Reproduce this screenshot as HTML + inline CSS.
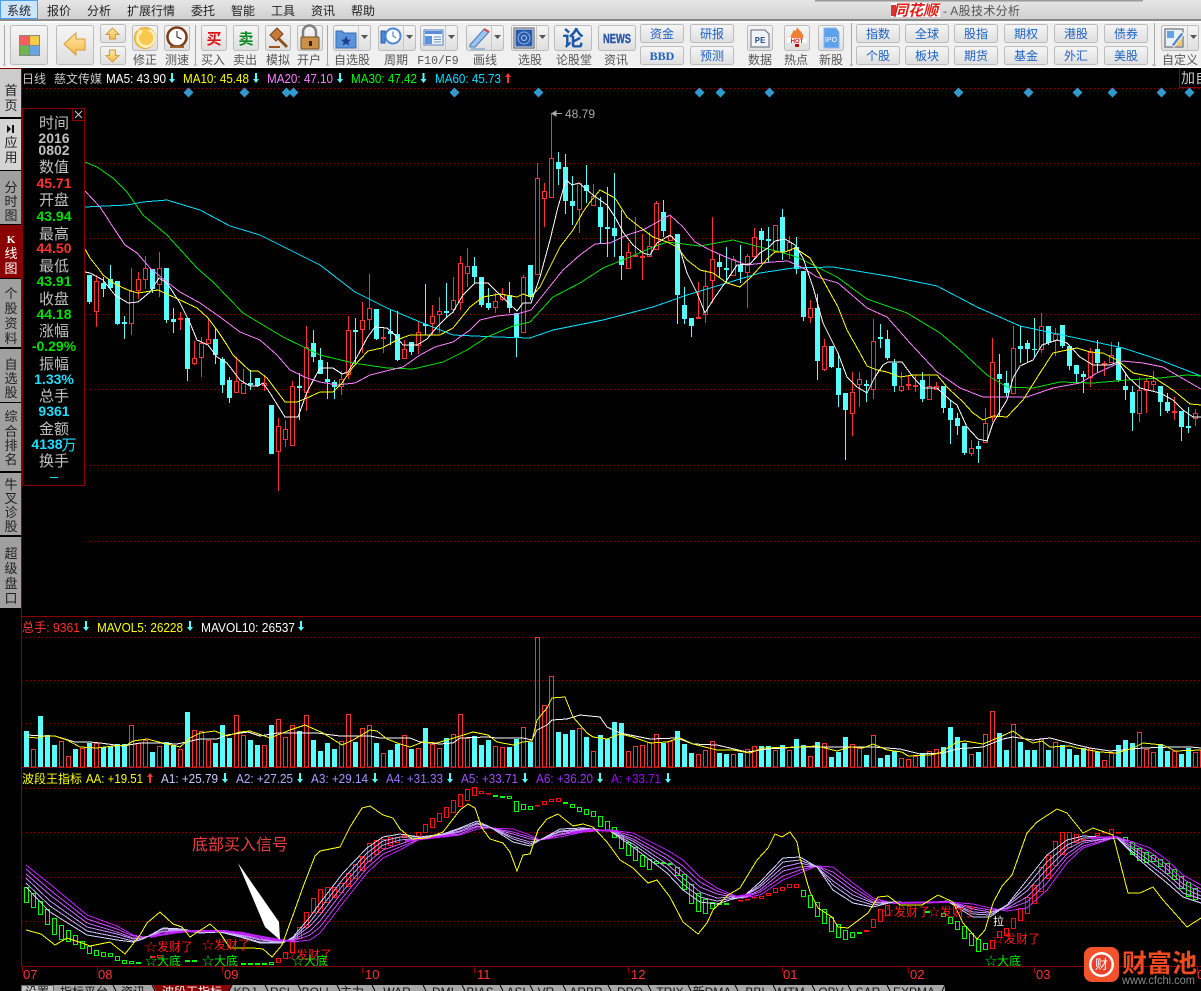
<!DOCTYPE html>
<html><head><meta charset="utf-8"><title>A股技术分析</title>
<style>
html,body{margin:0;padding:0;background:#000;width:1201px;height:991px;overflow:hidden}
svg{display:block;font-family:"Liberation Sans","WenQuanYi Zen Hei","Noto Sans CJK SC",sans-serif}
.l{font-size:12px;fill:#555;text-anchor:middle}
.m{font-size:12px;fill:#222}
.b{font-size:12px;fill:#1c62c4;text-anchor:middle}
.v{font-size:13px;fill:#222;text-anchor:middle}
.h{font-size:13px}
.p{font-size:15px;fill:#c0c0c0;text-anchor:middle}
.n{font-family:"Liberation Sans",sans-serif;font-size:14px;font-weight:bold;text-anchor:middle}
.t{font-size:12px;fill:#111;text-anchor:middle}
.ma{fill:none;stroke-width:1;shape-rendering:crispEdges}
.btn{fill:url(#g);stroke:#bcbcbc}
</style></head><body>
<svg width="1201" height="991" viewBox="0 0 1201 991" xmlns="http://www.w3.org/2000/svg">
<defs>
<linearGradient id="g" x1="0" y1="0" x2="0" y2="1"><stop offset="0" stop-color="#f6f6f6"/><stop offset="1" stop-color="#dedede"/></linearGradient>
<linearGradient id="mb" x1="0" y1="0" x2="0" y2="1"><stop offset="0" stop-color="#e6e6e6"/><stop offset="1" stop-color="#cfcfcf"/></linearGradient>
<linearGradient id="gold" x1="0" y1="0" x2="0" y2="1"><stop offset="0" stop-color="#ffe9a8"/><stop offset="1" stop-color="#f7b94a"/></linearGradient>
<path id="dn" d="M1.500 0h2v6h2l-3 4-3-4h2z"/>
<path id="up" d="M1.500 10h2v-6h2l-3-4-3 4h2z"/>
<path id="dm" d="M0-5 5 0 0 5-5 0z"/>
</defs>
<rect width="1201" height="991" fill="#000"/>

<!-- menu bar -->
<rect width="1201" height="20" fill="url(#mb)"/>
<rect x="815" y="0" width="328" height="1.500" fill="#999"/>
<rect x="0.500" y="0.500" width="37" height="18" fill="#cde4fb" stroke="#4a9fea"/>
<text class="m" x="7" y="15">系统</text><text class="m" x="47" y="15">报价</text><text class="m" x="87" y="15">分析</text><text class="m" x="127" y="15">扩展行情</text><text class="m" x="191" y="15">委托</text><text class="m" x="231" y="15">智能</text><text class="m" x="271" y="15">工具</text><text class="m" x="311" y="15">资讯</text><text class="m" x="351" y="15">帮助</text>
<rect x="891" y="3" width="49" height="14" fill="#fff"/><rect x="891" y="5" width="5" height="11" fill="#e03030"/>
<text x="893" y="15.500" font-size="15" font-weight="bold" font-style="italic" fill="#e0201c">同花顺</text>
<text x="943" y="15" font-size="12" fill="#555" textLength="77" lengthAdjust="spacing">- A股技术分析</text>

<!-- toolbar -->
<rect y="19" width="1201" height="2" fill="#8a8a8a"/>
<rect y="21" width="1201" height="2" fill="#fff"/>
<rect y="23" width="1201" height="44" fill="#f0f0f0"/>
<rect y="67" width="1201" height="1" fill="#fff"/>
<path d="M4.500 25V65M5.500 65H3M195.500 25V65M193.500 65H197M327.500 25V65M326 65H329M851.500 23V66M849.500 65H853M1154.500 23V66M1152 65H1156" stroke="#a8a8a8" fill="none"/>

<rect class="btn" x="10.500" y="25.500" width="37" height="39" rx="2"/>
<rect x="19" y="35" width="21" height="21" fill="#888"/><rect x="20" y="36" width="9" height="9" fill="#f06060"/><rect x="30" y="36" width="9" height="9" fill="#f5cd45"/><rect x="20" y="46" width="9" height="9" fill="#70b450"/><rect x="30" y="46" width="9" height="9" fill="#68a4e4"/>
<rect class="btn" x="56.500" y="25.500" width="37" height="39" rx="2"/>
<path d="M64 44 76 33V39H85V50H76V55z" fill="url(#gold)" stroke="#d89a34"/>
<rect class="btn" x="100.500" y="24.500" width="25" height="18" rx="2"/><path d="M112.500 28 119 34.500H115.500V39H109.500V34.500H106z" fill="url(#gold)" stroke="#d89a34"/>
<rect class="btn" x="100.500" y="46.500" width="25" height="18" rx="2"/><path d="M112.500 62 119 55.500H115.500V50H109.500V55.500H106z" fill="url(#gold)" stroke="#d89a34"/>
<rect class="btn" x="132.500" y="25.500" width="25" height="25" rx="2"/><circle cx="145" cy="38" r="10.500" fill="#f9c94f" stroke="#e6a530"/><path d="M149 30a8.500 8.500 0 1 1-9 2" fill="none" stroke="#fff2c0" stroke-width="2.500"/><path d="M138 29l5 2-3 4z" fill="#fff2c0"/>
<rect class="btn" x="164.500" y="25.500" width="25" height="25" rx="2"/><circle cx="177" cy="37" r="9.500" fill="#fff" stroke="#7c3a18" stroke-width="2.500"/><path d="M177 31V37L181.500 39" stroke="#222" fill="none"/><path d="M170 47h14" stroke="#a06030" stroke-width="2"/>
<rect class="btn" x="201.500" y="25.500" width="25" height="25" rx="2"/><text x="214" y="44" font-size="15" font-weight="bold" fill="#e01010" text-anchor="middle">买</text>
<rect class="btn" x="233.500" y="25.500" width="25" height="25" rx="2"/><text x="246" y="44" font-size="15" font-weight="bold" fill="#0a8a20" text-anchor="middle">卖</text>
<rect class="btn" x="265.500" y="25.500" width="25" height="25" rx="2"/><path d="M270 35 277 28 283 34 276 41z" fill="#c47a3a" stroke="#7a4418"/><path d="M278 38 287 47" stroke="#8a5020" stroke-width="3"/><rect x="269" y="46" width="11" height="2" fill="#a05020"/>
<rect class="btn" x="297.500" y="25.500" width="25" height="25" rx="2"/><path d="M303 37V32a6.500 6.500 0 0 1 13 0V37" fill="none" stroke="#808080" stroke-width="2.500"/><rect x="301" y="37" width="18" height="12" rx="1" fill="#c89048" stroke="#7a5020"/><rect x="309" y="41" width="3" height="5" fill="#3a2408"/>
<text class="l" x="145" y="64">修正</text><text class="l" x="177" y="64">测速</text><text class="l" x="213" y="64">买入</text><text class="l" x="245" y="64">卖出</text><text class="l" x="278" y="64">模拟</text><text class="l" x="309" y="64">开户</text>

<rect class="btn" x="333.500" y="25.500" width="37" height="25" rx="2"/><path d="M358.500 26V50" stroke="#c8c8c8"/><path d="M361 35h7l-3.500 4z" fill="#555"/>
<path d="M336 31h6l2 2h12v15h-20z" fill="#5a94dc" stroke="#3a6cb0"/><path d="M346 36l1.500 3.500 3.500.3-2.700 2.200.9 3.500-3.200-2-3.200 2 .9-3.500-2.700-2.200 3.500-.3z" fill="#1c3c90"/>
<rect class="btn" x="378.500" y="25.500" width="37" height="25" rx="2"/><path d="M403.500 26V50" stroke="#c8c8c8"/><path d="M406 35h7l-3.500 4z" fill="#555"/>
<rect x="381" y="31" width="4" height="12" fill="#4a8ad8" stroke="#2a5aa0"/><circle cx="393" cy="36" r="7.500" fill="#fff" stroke="#4a8ad8" stroke-width="2"/><path d="M393 31.500V36L396 38" stroke="#3a6ab0" fill="none"/>
<text class="l" x="352" y="64">自选股</text><text class="l" x="396" y="64">周期</text>
<rect class="btn" x="420.500" y="25.500" width="37" height="25" rx="2"/><path d="M445.500 26V50" stroke="#c8c8c8"/><path d="M448 35h7l-3.500 4z" fill="#555"/>
<rect x="424" y="30" width="19" height="15" fill="#eef4ff" stroke="#5580b8"/><rect x="425" y="31" width="17" height="3" fill="#5a8ed8"/><path d="M425 36h7v8h-7z" fill="#5a94e0"/><path d="M434 37h7M434 39.500h7M434 42h7" stroke="#6a90c0"/>
<text x="438" y="64" font-family="Liberation Mono,monospace" font-size="11.500" fill="#555" text-anchor="middle">F10/F9</text>
<rect class="btn" x="466.500" y="25.500" width="37" height="25" rx="2"/><path d="M491.500 26V50" stroke="#c8c8c8"/><path d="M494 35h7l-3.500 4z" fill="#555"/>
<path d="M470 45 484 29 489 32 475 47 470 47z" fill="#9cc4f0" stroke="#4a78b0"/><path d="M484 29 489 32" stroke="#e04040" stroke-width="2"/><path d="M471 49h14" stroke="#5a90d0"/>
<text class="l" x="485" y="64">画线</text>
<rect class="btn" x="511.500" y="25.500" width="37" height="25" rx="2"/><path d="M536.500 26V50" stroke="#c8c8c8"/><path d="M539 35h7l-3.500 4z" fill="#555"/>
<rect x="514" y="28" width="20" height="20" fill="#e8eef8" stroke="#555"/><rect x="515.500" y="29.500" width="17" height="17" fill="#2c5aa8"/><circle cx="524" cy="38" r="6" fill="none" stroke="#86b0e8"/><circle cx="524" cy="38" r="2.500" fill="none" stroke="#a8c8f0"/>
<text class="l" x="530" y="64">选股</text>
<rect class="btn" x="554.500" y="25.500" width="37" height="25" rx="2"/><text x="573" y="46" font-size="21" font-weight="bold" fill="#1a58a8" text-anchor="middle">论</text>
<text class="l" x="574" y="64">论股堂</text>
<rect class="btn" x="598.500" y="25.500" width="37" height="25" rx="2"/><text x="617" y="43" font-size="13" font-weight="bold" fill="#2a58a8" stroke="#2a58a8" stroke-width=".4" text-anchor="middle" textLength="28" lengthAdjust="spacingAndGlyphs">NEWS</text>
<text class="l" x="616" y="64">资讯</text>
<g><rect class="btn" x="640.500" y="24.500" width="43" height="18" rx="2"/><rect class="btn" x="640.500" y="46.500" width="43" height="18" rx="2"/><rect class="btn" x="690.500" y="24.500" width="43" height="18" rx="2"/><rect class="btn" x="690.500" y="46.500" width="43" height="18" rx="2"/></g>
<text class="b" x="662" y="38">资金</text><text x="662" y="60" font-family="Liberation Serif,serif" font-weight="bold" font-size="12" fill="#1c62c4" text-anchor="middle">BBD</text><text class="b" x="712" y="38">研报</text><text class="b" x="712" y="60">预测</text>
<rect class="btn" x="747.500" y="25.500" width="25" height="25" rx="2"/><path d="M751 30h14l4 4v13h-18z" fill="#f0f4fa" stroke="#667"/><text x="760" y="43" font-size="9" font-weight="bold" fill="#34568c" text-anchor="middle" font-family="Liberation Mono,monospace">PE</text>
<rect class="btn" x="784.500" y="25.500" width="25" height="25" rx="2"/><path d="M797 27c2 4 7 5 6 11h-12c-1-4 3-5 2-8 2 1 3 2 4-3z" fill="#f08030"/><rect x="787" y="38" width="20" height="5" fill="#fff"/><text x="797" y="43" font-size="6" font-weight="bold" fill="#c01010" text-anchor="middle">HOT</text><path d="M795 44h4v3h-4z" fill="#c01010"/>
<rect class="btn" x="818.500" y="25.500" width="25" height="25" rx="2"/><path d="M824 28h12l3 4v16h-15z" fill="#5ea0ea" stroke="#8ab8ec"/><text x="831" y="42" font-size="7" fill="#fff" text-anchor="middle">IPO</text>
<text class="l" x="760" y="64">数据</text><text class="l" x="796" y="64">热点</text><text class="l" x="831" y="64">新股</text>
<g><rect class="btn" x="856.500" y="24.500" width="43" height="18" rx="2"/><rect class="btn" x="905.500" y="24.500" width="43" height="18" rx="2"/><rect class="btn" x="954.500" y="24.500" width="43" height="18" rx="2"/><rect class="btn" x="1004.500" y="24.500" width="43" height="18" rx="2"/><rect class="btn" x="1054.500" y="24.500" width="43" height="18" rx="2"/><rect class="btn" x="1104.500" y="24.500" width="43" height="18" rx="2"/><rect class="btn" x="856.500" y="46.500" width="43" height="18" rx="2"/><rect class="btn" x="905.500" y="46.500" width="43" height="18" rx="2"/><rect class="btn" x="954.500" y="46.500" width="43" height="18" rx="2"/><rect class="btn" x="1004.500" y="46.500" width="43" height="18" rx="2"/><rect class="btn" x="1054.500" y="46.500" width="43" height="18" rx="2"/><rect class="btn" x="1104.500" y="46.500" width="43" height="18" rx="2"/></g>
<text class="b" x="878" y="38">指数</text><text class="b" x="927" y="38">全球</text><text class="b" x="976" y="38">股指</text><text class="b" x="1026" y="38">期权</text><text class="b" x="1076" y="38">港股</text><text class="b" x="1126" y="38">债券</text>
<text class="b" x="878" y="60">个股</text><text class="b" x="927" y="60">板块</text><text class="b" x="976" y="60">期货</text><text class="b" x="1026" y="60">基金</text><text class="b" x="1076" y="60">外汇</text><text class="b" x="1126" y="60">美股</text>
<rect class="btn" x="1161.500" y="25.500" width="37" height="25" rx="2"/><path d="M1187.500 26V50" stroke="#c8c8c8"/><path d="M1190 35h7l-3.500 4z" fill="#555"/>
<rect x="1165" y="29" width="18" height="18" fill="#e8f0fa" stroke="#555"/><rect x="1167" y="31" width="7" height="7" fill="#6aa0e0"/><rect x="1175" y="39" width="7" height="7" fill="#f0c860"/><path d="M1171 45 1181 32 1184 34 1174 47z" fill="#5a8ed0" stroke="#fff"/>
<text class="l" x="1180" y="64">自定义</text>

<!-- left tabs -->
<rect y="68" width="21" height="49" fill="#cccccc"/><rect y="119" width="21" height="51" fill="#d4d4d4"/><rect y="171" width="21" height="53" fill="#a0a0a0"/><rect y="225" width="21" height="53" fill="#8a0000"/><rect y="279" width="21" height="68" fill="#a0a0a0"/><rect y="349" width="21" height="53" fill="#a0a0a0"/><rect y="403" width="21" height="68" fill="#a0a0a0"/><rect y="473" width="21" height="62" fill="#a0a0a0"/><rect y="537" width="21" height="71" fill="#a0a0a0"/>
<path d="M0 68.500H21" stroke="#8a0000"/><path d="M7 125v8l4-4zM12 125h2v8h-2z" fill="#111"/>
<g class="tabs"><text class="v" x="11" y="95">首</text><text class="v" x="11" y="110">页</text><text class="v" x="11" y="147">应</text><text class="v" x="11" y="162">用</text><text class="v" x="11" y="192">分</text><text class="v" x="11" y="206">时</text><text class="v" x="11" y="220">图</text>
<text x="11" y="243" font-size="11" font-weight="bold" fill="#fff" text-anchor="middle" font-family="Liberation Serif,serif">K</text><text class="v" x="11" y="258" style="fill:#fff">线</text><text class="v" x="11" y="273" style="fill:#fff">图</text>
<text class="v" x="11" y="298">个</text><text class="v" x="11" y="313">股</text><text class="v" x="11" y="328">资</text><text class="v" x="11" y="343">料</text><text class="v" x="11" y="369">自</text><text class="v" x="11" y="383">选</text><text class="v" x="11" y="397">股</text><text class="v" x="11" y="421">综</text><text class="v" x="11" y="436">合</text><text class="v" x="11" y="450">排</text><text class="v" x="11" y="464">名</text><text class="v" x="11" y="489">牛</text><text class="v" x="11" y="503">叉</text><text class="v" x="11" y="517">诊</text><text class="v" x="11" y="531">股</text><text class="v" x="11" y="558">超</text><text class="v" x="11" y="573">级</text><text class="v" x="11" y="588">盘</text><text class="v" x="11" y="603">口</text></g>

<!-- frames and grid -->
<path d="M22 88.500H1201M86 163.500H1201M86 238.500H1201M86 314.500H1201M86 389.500H1201M86 465.500H1201M86 541.500H1201M22 637.500H1201M22 680.500H1201M22 723.500H1201M22 788.500H1201M22 832.500H1201M22 877.500H1201M22 921.500H1201" stroke="#8a0000" stroke-dasharray="1 3" fill="none"/>
<path d="M21.500 68V966M22 616.500H1201M22 767.500H1201M22 966.500H1201" stroke="#8a0000" fill="none"/>
<path d="M1179.500 68V87.500H1201" stroke="#8a0000" fill="none"/><text x="1181" y="83" font-size="14" fill="#ccc">加自</text>

<!-- legends -->
<text x="22" y="83" font-size="12" fill="#c8c8c8">日线</text><text x="54" y="83" font-size="12" fill="#c8c8c8">慈文传媒</text>
<text class="h" x="106" y="83" fill="#fff" textLength="60" lengthAdjust="spacingAndGlyphs">MA5: 43.90</text><use href="#dn" x="169.500" y="73" fill="#55ffff"/>
<text class="h" x="183" y="83" fill="#ffff00" textLength="66" lengthAdjust="spacingAndGlyphs">MA10: 45.48</text><use href="#dn" x="253.500" y="73" fill="#55ffff"/>
<text class="h" x="267" y="83" fill="#ff80ff" textLength="66" lengthAdjust="spacingAndGlyphs">MA20: 47.10</text><use href="#dn" x="337.500" y="73" fill="#55ffff"/>
<text class="h" x="351" y="83" fill="#00ff00" textLength="66" lengthAdjust="spacingAndGlyphs">MA30: 47.42</text><use href="#dn" x="421" y="73" fill="#55ffff"/>
<text class="h" x="435" y="83" fill="#00e0ff" textLength="66" lengthAdjust="spacingAndGlyphs">MA60: 45.73</text><use href="#up" x="505.500" y="73" fill="#ff3232"/>
<text class="h" x="22" y="632" fill="#ff3232" textLength="58" lengthAdjust="spacingAndGlyphs">总手: 9361</text><use href="#dn" x="83.500" y="621" fill="#55ffff"/>
<text class="h" x="97" y="632" fill="#ffff00" textLength="86" lengthAdjust="spacingAndGlyphs">MAVOL5: 26228</text><use href="#dn" x="187.500" y="621" fill="#55ffff"/>
<text class="h" x="201" y="632" fill="#fff" textLength="94" lengthAdjust="spacingAndGlyphs">MAVOL10: 26537</text><use href="#dn" x="298.500" y="621" fill="#55ffff"/>
<text x="22" y="783" font-size="12" fill="#ffff00">波段王指标</text><text class="h" x="86" y="783" fill="#ffff00" textLength="57" lengthAdjust="spacingAndGlyphs">AA: +19.51</text><use href="#up" x="147.500" y="773" fill="#ff3232"/>
<text class="h" x="161" y="783" fill="#c8c8ff" textLength="57" lengthAdjust="spacingAndGlyphs">A1: +25.79</text><use href="#dn" x="222.500" y="773" fill="#55ffff"/>
<text class="h" x="236" y="783" fill="#b0b0ff" textLength="57" lengthAdjust="spacingAndGlyphs">A2: +27.25</text><use href="#dn" x="297.500" y="773" fill="#55ffff"/>
<text class="h" x="311" y="783" fill="#a898ff" textLength="57" lengthAdjust="spacingAndGlyphs">A3: +29.14</text><use href="#dn" x="372.500" y="773" fill="#55ffff"/>
<text class="h" x="386" y="783" fill="#a070ff" textLength="57" lengthAdjust="spacingAndGlyphs">A4: +31.33</text><use href="#dn" x="447.500" y="773" fill="#55ffff"/>
<text class="h" x="461" y="783" fill="#a050ff" textLength="57" lengthAdjust="spacingAndGlyphs">A5: +33.71</text><use href="#dn" x="522.500" y="773" fill="#55ffff"/>
<text class="h" x="536" y="783" fill="#a030ff" textLength="57" lengthAdjust="spacingAndGlyphs">A6: +36.20</text><use href="#dn" x="597.500" y="773" fill="#55ffff"/>
<text class="h" x="611" y="783" fill="#a000ff" textLength="50" lengthAdjust="spacingAndGlyphs">A: +33.71</text><use href="#dn" x="665.500" y="773" fill="#55ffff"/>
<g fill="#3399cc"><use href="#dm" x="188.500" y="92.500"/><use href="#dm" x="244.500" y="92.500"/><use href="#dm" x="286.500" y="92.500"/><use href="#dm" x="293.500" y="92.500"/><use href="#dm" x="454.500" y="92.500"/><use href="#dm" x="538.500" y="92.500"/><use href="#dm" x="699.500" y="92.500"/><use href="#dm" x="720.500" y="92.500"/><use href="#dm" x="769.500" y="92.500"/><use href="#dm" x="958.500" y="92.500"/><use href="#dm" x="1028.500" y="92.500"/><use href="#dm" x="1077.500" y="92.500"/><use href="#dm" x="1112.500" y="92.500"/><use href="#dm" x="1161.500" y="92.500"/><use href="#dm" x="1189.500" y="92.500"/></g>

<!-- main candles -->
<path stroke="#55ffff" fill="none" d="M89.500 275V304M103.500 277V297M110.500 265V290M117.500 281V325M124.500 316V339M152.500 269V293M166.500 268V323M173.500 308V333M187.500 318V381M215.500 328V364M222.500 357V393M229.500 377V403M250.500 370V390M257.500 378V387M271.500 405V454M299.500 373V420M313.500 330V362M320.500 348V374M327.500 362V399M334.500 380V399M355.500 318V363M376.500 309V340M390.500 309V345M397.500 311V361M411.500 342V355M425.500 284V335M446.500 283V317M474.500 257V283M481.500 277V307M488.500 288V310M509.500 282V313M516.500 313V357M530.500 265V300M558.500 152V185M565.500 154V214M572.500 176V225M586.500 165V203M600.500 197V243M607.500 187V257M614.500 173V257M621.500 210V280M663.500 200V237M677.500 234V324M684.500 287V324M691.500 318V337M719.500 254V278M726.500 247V283M740.500 245V283M761.500 228V263M768.500 227V263M782.500 209V260M796.500 237V274M803.500 271V321M817.500 294V380M831.500 346V368M838.500 353V407M845.500 393V460M866.500 380V402M880.500 324V348M887.500 330V360M894.500 359V392M922.500 372V402M943.500 386V413M950.500 400V444M957.500 413V435M964.500 426V455M978.500 441V463M999.500 354V417M1006.500 371V397M1020.500 326V363M1027.500 340V363M1034.500 318V358M1048.500 326V345M1062.500 325V348M1069.500 346V370M1076.500 365V383M1083.500 371V393M1097.500 340V373M1118.500 342V382M1125.500 373V400M1132.500 386V431M1160.500 386V416M1167.500 393V413M1181.500 411V441M1188.500 407V433"/>
<path fill="#55ffff" d="M87 275h5V302h-5zM101 283h5V289h-5zM108 279h5V288h-5zM115 281h5V324h-5zM122 322h5V324h-5zM150 269h5V289h-5zM164 268h5V320h-5zM171 319h5V322h-5zM185 318h5V369h-5zM213 339h5V355h-5zM220 359h5V385h-5zM227 380h5V398h-5zM248 383h5V385h-5zM255 378h5V386h-5zM269 405h5V454h-5zM297 386h5V388h-5zM311 343h5V357h-5zM318 360h5V374h-5zM325 379h5V382h-5zM332 382h5V387h-5zM353 330h5V332h-5zM374 309h5V339h-5zM388 331h5V334h-5zM395 334h5V360h-5zM409 342h5V352h-5zM423 324h5V326h-5zM444 311h5V313h-5zM472 266h5V277h-5zM479 277h5V305h-5zM486 303h5V308h-5zM507 295h5V308h-5zM514 313h5V337h-5zM528 265h5V297h-5zM556 162h5V169h-5zM563 167h5V201h-5zM570 201h5V206h-5zM584 185h5V191h-5zM598 207h5V227h-5zM605 227h5V229h-5zM612 228h5V236h-5zM619 256h5V265h-5zM661 212h5V231h-5zM675 234h5V295h-5zM682 305h5V319h-5zM689 318h5V326h-5zM717 262h5V267h-5zM724 268h5V270h-5zM738 265h5V272h-5zM759 231h5V240h-5zM766 239h5V241h-5zM780 217h5V252h-5zM794 247h5V269h-5zM801 271h5V317h-5zM815 308h5V361h-5zM829 346h5V367h-5zM836 368h5V395h-5zM843 393h5V410h-5zM864 384h5V386h-5zM878 337h5V339h-5zM885 339h5V358h-5zM892 363h5V386h-5zM920 380h5V399h-5zM941 386h5V408h-5zM948 408h5V420h-5zM955 418h5V426h-5zM962 426h5V453h-5zM976 446h5V449h-5zM997 374h5V379h-5zM1004 383h5V393h-5zM1018 346h5V349h-5zM1025 343h5V349h-5zM1032 349h5V350h-5zM1046 326h5V343h-5zM1060 325h5V346h-5zM1067 346h5V366h-5zM1074 365h5V374h-5zM1081 374h5V377h-5zM1095 349h5V363h-5zM1116 348h5V380h-5zM1123 386h5V390h-5zM1130 392h5V413h-5zM1158 386h5V402h-5zM1165 402h5V411h-5zM1179 411h5V427h-5zM1186 426h5V428h-5z"/>
<path stroke="#ff3232" fill="none" d="M96.500 275V327M131.500 268V335M138.500 272V299M145.500 256V289M159.500 252V297M180.500 312V330M194.500 341V365M201.500 337V377M208.500 319V343M236.500 357V393M243.500 369V394M264.500 375V391M278.500 418V491M285.500 420V447M292.500 381V445M306.500 326V411M341.500 371V395M348.500 316V379M362.500 302V353M369.500 274V330M383.500 328V353M404.500 340V359M418.500 322V354M432.500 305V335M439.500 297V333M453.500 277V313M460.500 256V310M467.500 248V287M495.500 293V313M502.500 288V301M523.500 275V332M537.500 163V274M544.500 183V227M551.500 113V197M579.500 183V233M593.500 184V205M628.500 243V268M635.500 217V257M642.500 234V280M649.500 232V256M656.500 201V250M670.500 215V240M698.500 282V318M705.500 270V323M712.500 217V303M733.500 256V275M747.500 254V308M754.500 228V260M775.500 225V251M789.500 236V259M810.500 300V323M824.500 339V371M852.500 372V436M859.500 372V407M873.500 319V399M901.500 372V392M908.500 376V390M915.500 375V392M929.500 376V399M936.500 382V390M971.500 440V456M985.500 408V442M992.500 338V422M1013.500 326V393M1041.500 313V353M1055.500 328V356M1090.500 348V387M1104.500 361V376M1111.500 342V362M1139.500 377V422M1146.500 378V413M1153.500 371V392M1174.500 397V420M1195.500 409V426"/>
<path stroke="#ff3232" fill="#000" d="M94.500 281.500h4V311.500h-4zM129.500 291.500h4V323.500h-4zM136.500 279.500h4V290.500h-4zM143.500 268.500h4V279.500h-4zM157.500 268.500h4V284.500h-4zM178.500 318.500h4V319.500h-4zM192.500 358.500h4V363.500h-4zM199.500 343.500h4V357.500h-4zM206.500 339.500h4V343.500h-4zM234.500 381.500h4V392.500h-4zM241.500 383.500h4V393.500h-4zM262.500 383.500h4V385.500h-4zM276.500 426.500h4V451.500h-4zM283.500 429.500h4V439.500h-4zM290.500 386.500h4V445.500h-4zM304.500 347.500h4V392.500h-4zM339.500 379.500h4V386.500h-4zM346.500 330.500h4V374.500h-4zM360.500 320.500h4V329.500h-4zM367.500 308.500h4V319.500h-4zM381.500 337.500h4V338.500h-4zM402.500 349.500h4V358.500h-4zM416.500 332.500h4V345.500h-4zM430.500 316.500h4V323.500h-4zM437.500 311.500h4V314.500h-4zM451.500 300.500h4V309.500h-4zM458.500 263.500h4V302.500h-4zM465.500 266.500h4V273.500h-4zM493.500 301.500h4V307.500h-4zM500.500 294.500h4V299.500h-4zM521.500 277.500h4V332.500h-4zM535.500 178.500h4V274.500h-4zM542.500 191.500h4V198.500h-4zM549.500 158.500h4V197.500h-4zM577.500 183.500h4V209.500h-4zM591.500 196.500h4V205.500h-4zM626.500 252.500h4V268.500h-4zM633.500 255.500h4V256.500h-4zM640.500 256.500h4V257.500h-4zM647.500 246.500h4V256.500h-4zM654.500 203.500h4V249.500h-4zM668.500 236.500h4V240.500h-4zM696.500 317.500h4V318.500h-4zM703.500 286.500h4V314.500h-4zM710.500 259.500h4V280.500h-4zM731.500 259.500h4V275.500h-4zM745.500 256.500h4V272.500h-4zM752.500 237.500h4V256.500h-4zM773.500 225.500h4V251.500h-4zM787.500 242.500h4V250.500h-4zM808.500 308.500h4V317.500h-4zM822.500 346.500h4V369.500h-4zM850.500 392.500h4V413.500h-4zM857.500 379.500h4V384.500h-4zM871.500 341.500h4V389.500h-4zM899.500 386.500h4V390.500h-4zM906.500 384.500h4V385.500h-4zM913.500 385.500h4V386.500h-4zM927.500 386.500h4V399.500h-4zM934.500 386.500h4V389.500h-4zM969.500 448.500h4V453.500h-4zM983.500 423.500h4V442.500h-4zM990.500 362.500h4V417.500h-4zM1011.500 348.500h4V393.500h-4zM1039.500 326.500h4V349.500h-4zM1053.500 334.500h4V340.500h-4zM1088.500 352.500h4V377.500h-4zM1102.500 363.500h4V364.500h-4zM1109.500 355.500h4V362.500h-4zM1137.500 390.500h4V413.500h-4zM1144.500 381.500h4V390.500h-4zM1151.500 381.500h4V384.500h-4zM1172.500 411.500h4V412.500h-4zM1193.500 413.500h4V418.500h-4z"/>

<!-- main MAs -->
<polyline class="ma" stroke="#00e0ff" points="85,207 127,205 143,202 167,200 200,210 230,226 260,235 300,255 320,265 355,292 387,308 420,322 453,335 497,337 530,338 553,330 603,320 653,307 687,295 760,273 793,268 833,267 893,277 937,286 977,307 1020,326 1067,336 1123,348 1160,360 1201,376"/>
<polyline class="ma" stroke="#00e000" points="85,162 97,167 113,178 127,192 143,215 167,235 197,268 213,282 243,313 283,337 320,355 353,363 387,368 413,369 443,362 467,350 487,337 513,326 530,322 553,297 580,283 603,268 630,257 653,247 667,242 700,246 733,240 760,247 780,252 797,257 813,265 837,277 867,299 907,313 940,333 960,350 987,375 1007,387 1033,388 1060,382 1093,383 1127,380 1160,378 1187,375 1201,376"/>
<polyline class="ma" stroke="#ff80ff" points="85,191 100,207 115,230 125,245 137,253 150,268 167,282 180,292 200,303 220,317 240,332 260,340 277,355 290,370 307,378 320,382 337,385 355,383 370,375 390,370 403,367 420,355 435,347 453,342 470,330 480,320 497,316 517,314 531,310 547,290 563,270 580,255 595,244 610,243 627,235 643,230 670,215 683,227 695,242 710,250 728,258 747,265 772,262 788,261 803,268 817,277 838,283 867,308 887,317 910,343 937,372 960,388 983,397 1007,397 1027,397 1053,388 1080,383 1097,373 1123,361 1143,363 1163,367 1180,377 1201,389"/>
<polyline class="ma" stroke="#ffff00" points="85,249 90,258 98,268 103,275 115,284 128,290 138,293 158,290 180,300 197,308 208,318 217,330 227,345 233,355 250,371 258,371 267,378 285,402 297,402 307,398 320,392 333,392 342,383 353,367 368,351 382,348 397,340 410,335 440,335 453,328 470,307 483,297 500,294 517,297 523,294 531,297 540,287 550,267 560,247 573,230 583,212 590,202 600,190 615,198 627,217 637,225 653,237 667,242 677,247 687,260 700,270 713,273 727,283 740,287 750,278 760,267 768,258 775,252 785,252 795,248 810,258 823,280 838,307 847,330 860,353 867,366 877,370 887,372 900,377 913,375 937,375 948,388 963,402 973,413 983,420 993,416 1007,417 1023,400 1040,373 1053,353 1067,350 1077,348 1090,352 1103,353 1117,360 1133,373 1153,377 1173,390 1190,404 1201,405"/>
<polyline class="ma" stroke="#fff" points="85,272 90,273 103,280 115,295 128,303 138,302 150,292 159,278 167,283 180,303 190,323 197,340 208,345 217,357 227,363 240,380 250,386 258,386 263,383 270,393 285,417 298,417 307,392 320,368 333,368 342,374 348,372 357,357 367,338 375,327 387,328 395,335 403,345 417,345 427,339 437,327 447,317 453,312 463,295 475,283 488,283 500,295 517,311 523,303 531,303 540,277 550,240 558,207 566,180 572,185 579,183 593,195 607,205 615,217 623,232 633,245 643,253 650,255 657,243 670,235 678,243 687,273 697,293 705,313 713,300 727,280 737,265 750,264 760,253 768,248 775,241 785,239 795,245 803,258 813,287 823,323 838,353 847,377 857,387 867,393 875,377 883,365 888,362 902,362 913,377 923,388 937,388 950,400 957,405 967,427 978,439 987,441 993,423 1007,400 1013,378 1020,366 1033,360 1042,345 1057,340 1067,343 1080,357 1093,365 1110,365 1118,362 1128,377 1140,388 1160,393 1173,400 1183,410 1193,417 1201,417"/>
<path d="M552 113.500H562M552 113.500 556 111V116z" stroke="#aaa" fill="#aaa"/><text x="565" y="118" font-size="12" fill="#aaa">48.79</text>

<!-- info panel -->
<rect x="22.500" y="108.500" width="62" height="377" fill="#000" stroke="#8a0000"/>
<rect x="72.500" y="108.500" width="12" height="12" fill="#000" stroke="#8a0000"/><path d="M75 111 82 118M82 111 75 118" stroke="#ccc"/>
<text class="p" x="54" y="128">时间</text><text class="n" x="54" y="143" fill="#c0c0c0">2016</text><text class="n" x="54" y="155" fill="#c0c0c0">0802</text>
<text class="p" x="54" y="172">数值</text><text class="n" x="54" y="188" fill="#ff3232">45.71</text>
<text class="p" x="54" y="205">开盘</text><text class="n" x="54" y="221" fill="#00e000">43.94</text>
<text class="p" x="54" y="239">最高</text><text class="n" x="54" y="253" fill="#ff3232">44.50</text>
<text class="p" x="54" y="271">最低</text><text class="n" x="54" y="286" fill="#00e000">43.91</text>
<text class="p" x="54" y="304">收盘</text><text class="n" x="54" y="319" fill="#00e000">44.18</text>
<text class="p" x="54" y="336">涨幅</text><text class="n" x="54" y="351" fill="#00e000">-0.29%</text>
<text class="p" x="54" y="369">振幅</text><text class="n" x="54" y="384" fill="#22ddff">1.33%</text>
<text class="p" x="54" y="401">总手</text><text class="n" x="54" y="416" fill="#22ddff">9361</text>
<text class="p" x="54" y="434">金额</text><text class="n" x="47" y="449" fill="#22ddff">4138</text><text x="69" y="450" font-size="15" fill="#22ddff" text-anchor="middle">万</text>
<text class="p" x="54" y="466">换手</text><path d="M50 477.500H58" stroke="#22ddff"/>

<!-- volume -->
<path fill="#55ffff" d="M24 731h5V767h-5zM38 716h5V767h-5zM45 735h5V767h-5zM52 745h5V767h-5zM73 749h5V767h-5zM87 743h5V767h-5zM101 747h5V767h-5zM108 746h5V767h-5zM115 744h5V767h-5zM122 744h5V767h-5zM150 752h5V767h-5zM164 742h5V767h-5zM171 745h5V767h-5zM185 712h5V767h-5zM213 743h5V767h-5zM220 725h5V767h-5zM227 738h5V767h-5zM248 740h5V767h-5zM255 745h5V767h-5zM269 725h5V767h-5zM297 731h5V767h-5zM311 740h5V767h-5zM318 751h5V767h-5zM325 743h5V767h-5zM332 749h5V767h-5zM353 742h5V767h-5zM374 743h5V767h-5zM388 750h5V767h-5zM395 744h5V767h-5zM409 749h5V767h-5zM423 728h5V767h-5zM444 738h5V767h-5zM472 736h5V767h-5zM479 745h5V767h-5zM486 740h5V767h-5zM507 747h5V767h-5zM514 739h5V767h-5zM528 742h5V767h-5zM556 732h5V767h-5zM563 734h5V767h-5zM570 730h5V767h-5zM584 737h5V767h-5zM598 735h5V767h-5zM605 739h5V767h-5zM612 722h5V767h-5zM619 723h5V767h-5zM661 743h5V767h-5zM675 731h5V767h-5zM682 744h5V767h-5zM689 753h5V767h-5zM717 753h5V767h-5zM724 754h5V767h-5zM738 753h5V767h-5zM759 746h5V767h-5zM766 746h5V767h-5zM780 745h5V767h-5zM794 739h5V767h-5zM801 745h5V767h-5zM815 742h5V767h-5zM829 757h5V767h-5zM836 752h5V767h-5zM843 737h5V767h-5zM864 755h5V767h-5zM878 758h5V767h-5zM885 755h5V767h-5zM892 751h5V767h-5zM920 753h5V767h-5zM941 747h5V767h-5zM948 727h5V767h-5zM955 737h5V767h-5zM962 743h5V767h-5zM976 752h5V767h-5zM997 733h5V767h-5zM1004 750h5V767h-5zM1018 742h5V767h-5zM1025 750h5V767h-5zM1032 750h5V767h-5zM1046 750h5V767h-5zM1060 745h5V767h-5zM1067 749h5V767h-5zM1074 755h5V767h-5zM1081 748h5V767h-5zM1095 752h5V767h-5zM1116 745h5V767h-5zM1123 740h5V767h-5zM1130 743h5V767h-5zM1158 744h5V767h-5zM1165 751h5V767h-5zM1179 754h5V767h-5zM1186 748h5V767h-5z"/>
<path stroke="#ff3232" fill="none" d="M31.500 749.500h4V767h-4zM59.500 741.500h4V767h-4zM66.500 756.500h4V767h-4zM80.500 748.500h4V767h-4zM94.500 743.500h4V767h-4zM129.500 725.500h4V767h-4zM136.500 743.500h4V767h-4zM143.500 740.500h4V767h-4zM157.500 746.500h4V767h-4zM178.500 749.500h4V767h-4zM192.500 730.500h4V767h-4zM199.500 731.500h4V767h-4zM206.500 740.500h4V767h-4zM234.500 715.500h4V767h-4zM241.500 735.500h4V767h-4zM262.500 745.500h4V767h-4zM276.500 719.500h4V767h-4zM283.500 737.500h4V767h-4zM290.500 725.500h4V767h-4zM304.500 715.500h4V767h-4zM339.500 741.500h4V767h-4zM346.500 714.500h4V767h-4zM360.500 728.500h4V767h-4zM367.500 725.500h4V767h-4zM381.500 753.500h4V767h-4zM402.500 735.500h4V767h-4zM416.500 748.500h4V767h-4zM430.500 744.500h4V767h-4zM437.500 748.500h4V767h-4zM451.500 734.500h4V767h-4zM458.500 714.500h4V767h-4zM465.500 738.500h4V767h-4zM493.500 746.500h4V767h-4zM500.500 747.500h4V767h-4zM521.500 727.500h4V767h-4zM535.500 637.500h4V767h-4zM542.500 705.500h4V767h-4zM549.500 676.500h4V767h-4zM577.500 728.500h4V767h-4zM591.500 751.500h4V767h-4zM626.500 751.500h4V767h-4zM633.500 746.500h4V767h-4zM640.500 745.500h4V767h-4zM647.500 742.500h4V767h-4zM654.500 734.500h4V767h-4zM668.500 741.500h4V767h-4zM696.500 754.500h4V767h-4zM703.500 750.500h4V767h-4zM710.500 741.500h4V767h-4zM731.500 754.500h4V767h-4zM745.500 749.500h4V767h-4zM752.500 746.500h4V767h-4zM773.500 750.500h4V767h-4zM787.500 750.500h4V767h-4zM808.500 756.500h4V767h-4zM822.500 743.500h4V767h-4zM850.500 744.500h4V767h-4zM857.500 748.500h4V767h-4zM871.500 735.500h4V767h-4zM899.500 758.500h4V767h-4zM906.500 759.500h4V767h-4zM913.500 756.500h4V767h-4zM927.500 751.500h4V767h-4zM934.500 749.500h4V767h-4zM969.500 754.500h4V767h-4zM983.500 734.500h4V767h-4zM990.500 711.500h4V767h-4zM1011.500 724.500h4V767h-4zM1039.500 738.500h4V767h-4zM1053.500 742.500h4V767h-4zM1088.500 748.500h4V767h-4zM1102.500 760.500h4V767h-4zM1109.500 753.500h4V767h-4zM1137.500 732.500h4V767h-4zM1144.500 749.500h4V767h-4zM1151.500 752.500h4V767h-4zM1172.500 751.500h4V767h-4zM1193.500 752.500h4V767h-4zM1200.500 750.500h4V767h-4z"/>
<polyline class="ma" stroke="#fff" points="27,735 43,736 55,736 75,742 90,742 100,743 123,746 140,743 157,743 177,744 200,739 217,739 227,735 248,732 260,736 277,733 300,733 317,733 340,736 370,736 380,738 400,738 410,738 420,742 440,744 453,743 460,738 487,737 497,738 513,738 523,738 532,740 537,730 547,725 552,720 567,719 580,715 600,717 607,727 620,733 650,739 677,738 693,744 717,745 747,752 767,749 800,747 830,747 847,747 873,747 900,749 920,754 943,753 957,749 983,747 1003,739 1013,737 1033,740 1050,738 1077,745 1090,748 1110,751 1143,748 1173,747 1190,747 1201,748"/>
<polyline class="ma" stroke="#ffff00" points="27,737 37,738 45,736 55,736 67,740 80,747 97,748 113,746 127,745 133,741 147,739 163,743 180,747 190,738 200,733 215,731 227,736 240,732 250,731 270,738 290,730 305,725 323,733 342,745 353,740 370,730 377,731 387,739 400,744 410,747 423,742 437,743 457,737 473,732 488,735 497,742 513,745 523,742 532,741 537,720 547,708 552,698 565,697 573,717 587,733 593,737 607,739 620,734 633,737 650,743 667,742 680,738 693,744 717,750 733,750 750,753 763,748 800,747 817,746 837,751 850,747 863,748 873,744 887,750 902,752 908,756 930,755 940,753 957,742 965,741 983,744 1000,737 1013,731 1023,738 1033,743 1042,741 1050,747 1070,746 1077,748 1100,752 1117,753 1133,748 1143,743 1163,745 1175,751 1201,750"/>

<!-- indicator bars -->
<path stroke="#00ff00" fill="none" d="M24.500 887.500h4V902.500h-4zM31.500 893.500h4V907.500h-4zM38.500 901.500h4V914.500h-4zM45.500 909.500h4V924.500h-4zM52.500 918.500h4V934.500h-4zM59.500 925.500h4V939.500h-4zM66.500 930.500h4V941.500h-4zM73.500 935.500h4V944.500h-4zM80.500 941.500h4V948.500h-4zM87.500 946.500h4V953.500h-4zM94.500 950.500h4V955.500h-4zM101.500 952.500h4V956.500h-4zM108.500 953.500h4V956.500h-4zM115.500 956.500h4V960.500h-4zM122.500 960.500h4V963.500h-4zM129.500 961.500h4V963.500h-4zM136.500 962.500h4V963.500h-4zM185.500 960.500h4V961.500h-4zM192.500 960.500h4V961.500h-4zM241.500 963.500h4V964.500h-4zM248.500 963.500h4V964.500h-4zM255.500 963.500h4V964.500h-4zM262.500 963.500h4V964.500h-4zM269.500 962.500h4V964.500h-4zM493.500 795.500h4V796.500h-4zM500.500 796.500h4V797.500h-4zM507.500 796.500h4V798.500h-4zM514.500 801.500h4V811.500h-4zM521.500 804.500h4V809.500h-4zM528.500 806.500h4V809.500h-4zM563.500 802.500h4V803.500h-4zM570.500 804.500h4V807.500h-4zM577.500 807.500h4V811.500h-4zM584.500 809.500h4V814.500h-4zM591.500 811.500h4V816.500h-4zM598.500 816.500h4V826.500h-4zM605.500 821.500h4V830.500h-4zM612.500 827.500h4V837.500h-4zM619.500 835.500h4V848.500h-4zM626.500 842.500h4V855.500h-4zM633.500 847.500h4V860.500h-4zM640.500 855.500h4V866.500h-4zM647.500 859.500h4V869.500h-4zM654.500 861.500h4V863.500h-4zM661.500 862.500h4V863.500h-4zM668.500 863.500h4V864.500h-4zM675.500 867.500h4V875.500h-4zM682.500 874.500h4V889.500h-4zM689.500 884.500h4V903.500h-4zM696.500 893.500h4V911.500h-4zM703.500 899.500h4V913.500h-4zM710.500 902.500h4V908.500h-4zM717.500 903.500h4V904.500h-4zM724.500 903.500h4V904.500h-4zM801.500 890.500h4V896.500h-4zM808.500 895.500h4V907.500h-4zM815.500 902.500h4V916.500h-4zM822.500 909.500h4V923.500h-4zM829.500 917.500h4V931.500h-4zM836.500 924.500h4V937.500h-4zM843.500 930.500h4V939.500h-4zM850.500 932.500h4V937.500h-4zM857.500 932.500h4V933.500h-4zM925.500 911.500h4V912.500h-4zM941.500 913.500h4V916.500h-4zM948.500 917.500h4V923.500h-4zM955.500 921.500h4V929.500h-4zM962.500 926.500h4V938.500h-4zM969.500 933.500h4V945.500h-4zM976.500 939.500h4V951.500h-4zM983.500 943.500h4V949.500h-4zM1123.500 837.500h4V840.500h-4zM1130.500 842.500h4V854.500h-4zM1137.500 848.500h4V860.500h-4zM1144.500 852.500h4V862.500h-4zM1151.500 855.500h4V861.500h-4zM1158.500 859.500h4V866.500h-4zM1165.500 863.500h4V873.500h-4zM1172.500 869.500h4V879.500h-4zM1179.500 876.500h4V888.500h-4zM1186.500 882.500h4V896.500h-4zM1193.500 888.500h4V899.500h-4z"/>
<path stroke="#ff1010" fill="none" d="M150.500 956.500h4V957.500h-4zM157.500 955.500h4V957.500h-4zM276.500 958.500h4V962.500h-4zM283.500 952.500h4V958.500h-4zM290.500 941.500h4V952.500h-4zM297.500 927.500h4V938.500h-4zM304.500 912.500h4V927.500h-4zM311.500 898.500h4V912.500h-4zM318.500 889.500h4V912.500h-4zM325.500 887.500h4V902.500h-4zM332.500 887.500h4V897.500h-4zM339.500 883.500h4V892.500h-4zM346.500 873.500h4V886.500h-4zM353.500 864.500h4V878.500h-4zM360.500 856.500h4V870.500h-4zM367.500 843.500h4V861.500h-4zM374.500 840.500h4V854.500h-4zM381.500 839.500h4V848.500h-4zM388.500 837.500h4V845.500h-4zM395.500 837.500h4V842.500h-4zM402.500 835.500h4V837.500h-4zM416.500 832.500h4V836.500h-4zM423.500 824.500h4V832.500h-4zM430.500 818.500h4V827.500h-4zM437.500 813.500h4V821.500h-4zM444.500 807.500h4V817.500h-4zM451.500 800.500h4V812.500h-4zM458.500 794.500h4V806.500h-4zM465.500 789.500h4V800.500h-4zM472.500 787.500h4V795.500h-4zM479.500 791.500h4V793.500h-4zM486.500 793.500h4V794h-4zM535.500 805.500h4V806h-4zM542.500 801.500h4V804.500h-4zM549.500 799.500h4V801.500h-4zM556.500 798.500h4V801.500h-4zM738.500 900.500h4V901h-4zM745.500 899.500h4V900h-4zM752.500 897.500h4V898h-4zM759.500 896.500h4V898.500h-4zM766.500 893.500h4V895.500h-4zM773.500 888.500h4V892.500h-4zM780.500 887.500h4V890.500h-4zM787.500 884.500h4V887.500h-4zM794.500 884.500h4V887.500h-4zM864.500 930.500h4V931.500h-4zM871.500 919.500h4V927.500h-4zM878.500 909.500h4V921.500h-4zM885.500 905.500h4V915.500h-4zM990.500 940.500h4V948.500h-4zM997.500 931.500h4V937.500h-4zM1004.500 928.500h4V935.500h-4zM1011.500 918.500h4V928.500h-4zM1018.500 908.500h4V920.500h-4zM1025.500 897.500h4V913.500h-4zM1032.500 885.500h4V903.500h-4zM1039.500 867.500h4V891.500h-4zM1046.500 855.500h4V878.500h-4zM1053.500 841.500h4V865.500h-4zM1060.500 832.500h4V854.500h-4zM1067.500 832.500h4V847.500h-4zM1074.500 834.500h4V842.500h-4zM1081.500 839.500h4V840h-4zM1095.500 833.500h4V835.500h-4zM1102.500 832.500h4V833h-4zM1109.500 829.500h4V834.500h-4zM1116.500 832.500h4V833h-4z"/>

<!-- ribbon -->
<polyline class="ma" stroke="#c020ff" points="26,865 50,884 87,915 117,926 133,935 143,937 163,935 183,932 200,932 220,931 240,932 260,936 283,940 293,942 310,940 320,933 343,903 367,873 383,858 400,850 420,839 443,837 460,835 477,829 490,828 513,829 530,835 540,840 560,837 583,832 610,830 633,833 667,850 683,860 700,877 717,888 733,895 743,898 760,895 783,880 800,873 817,866 833,867 853,883 873,898 893,903 927,903 947,902 973,904 990,908 1007,911 1027,908 1047,890 1067,863 1083,848 1117,837 1133,842 1150,848 1167,860 1183,875 1201,885"/>
<polyline class="ma" stroke="#c848ff" points="26,869 50,890 87,919 117,929 133,936 143,937 163,934 183,931 200,932 220,931 240,933 260,937 283,941 293,941 310,935 320,927 343,897 367,868 383,854 400,847 420,839 443,836 460,834 477,827 490,828 513,832 530,837 540,840 560,835 583,831 610,830 633,836 667,855 683,866 700,882 717,891 733,896 743,898 760,892 783,876 800,870 817,866 833,872 853,887 873,900 893,903 927,903 947,902 973,907 990,910 1007,909 1027,902 1047,883 1067,858 1083,846 1117,837 1133,844 1150,852 1167,865 1183,879 1201,889"/>
<polyline class="ma" stroke="#c868ff" points="26,874 50,895 87,923 117,932 133,938 143,938 163,932 183,931 200,932 220,931 240,934 260,939 283,941 293,940 310,931 320,921 343,891 367,863 383,850 400,844 420,838 443,836 460,832 477,826 490,828 513,834 530,839 540,840 560,834 583,830 610,830 633,839 667,859 683,872 700,887 717,894 733,897 743,898 760,890 783,871 800,867 817,866 833,876 853,891 873,902 893,903 927,903 947,902 973,909 990,912 1007,908 1027,897 1047,876 1067,854 1083,843 1117,837 1133,847 1150,856 1167,869 1183,884 1201,892"/>
<polyline class="ma" stroke="#c890ff" points="26,878 50,901 87,927 117,934 133,939 143,938 163,931 183,930 200,933 220,932 240,935 260,940 283,942 293,939 310,926 320,915 343,885 367,858 383,845 400,840 420,838 443,835 460,831 477,824 490,827 513,837 530,842 540,840 560,832 583,830 610,831 633,841 667,864 683,878 700,892 717,898 733,897 743,897 760,887 783,867 800,863 817,867 833,881 853,895 873,903 893,902 927,903 947,901 973,912 990,913 1007,906 1027,891 1047,869 1067,849 1083,841 1117,838 1133,849 1150,861 1167,874 1183,888 1201,896"/>
<polyline class="ma" stroke="#c8b0ff" points="26,883 50,906 87,931 117,937 133,941 143,939 163,929 183,930 200,933 220,932 240,936 260,942 283,942 293,938 310,922 320,909 343,879 367,853 383,841 400,837 420,837 443,835 460,829 477,823 490,827 513,839 530,844 540,840 560,831 583,829 610,831 633,844 667,868 683,884 700,897 717,901 733,898 743,897 760,885 783,862 800,860 817,867 833,885 853,899 873,905 893,902 927,903 947,901 973,914 990,915 1007,905 1027,886 1047,862 1067,845 1083,838 1117,838 1133,852 1150,865 1167,878 1183,893 1201,899"/>
<polyline class="ma" stroke="#d4d4ff" points="26,887 50,912 87,935 117,940 133,942 143,939 163,928 183,929 200,933 220,932 240,937 260,943 283,943 293,937 310,917 320,903 343,873 367,848 383,837 400,834 420,837 443,834 460,828 477,821 490,827 513,842 530,846 540,840 560,829 583,828 610,831 633,847 667,873 683,890 700,902 717,904 733,899 743,897 760,882 783,858 800,857 817,867 833,890 853,903 873,907 893,902 927,903 947,901 973,917 990,917 1007,905 1027,880 1047,855 1067,840 1083,836 1117,838 1133,854 1150,869 1167,883 1183,897 1201,903"/>
<path d="M150 937 170 933 190 931 225 931 250 935 275 940 292 941M405 841 430 838 452 835M570 833 590 830 618 831M735 897 752 894M893 903 950 902M1090 838 1118 837" fill="none" stroke="#c020ff" stroke-width="2"/>
<polyline class="ma" stroke="#ffff00" points="26,930 41,934 55,945 67,938 82,943 90,946 110,942 125,954 140,935 147,923 160,912 173,924 182,927 190,937 210,924 220,933 230,948 253,948 263,949 272,957 282,945 293,915 303,887 315,856 320,851 340,847 350,827 362,808 370,806 383,815 393,818 400,829 412,839 427,838 443,832 460,810 468,804 475,808 482,828 490,839 503,843 510,852 517,871 523,855 530,854 538,830 547,819 558,814 573,826 583,824 593,827 607,842 620,860 633,868 648,883 657,880 670,897 683,922 698,934 707,923 713,910 728,895 740,888 757,860 768,848 775,834 782,837 790,832 797,842 800,858 810,892 818,908 832,917 838,927 848,928 868,913 878,897 888,896 900,905 922,905 938,895 953,902 963,923 977,939 985,930 993,903 1002,886 1012,875 1027,833 1037,822 1057,809 1067,813 1083,833 1093,828 1113,835 1128,893 1140,893 1153,887 1163,900 1187,927 1201,918"/>

<!-- annotations -->
<text x="192" y="850" font-size="16" fill="#e84040">底部买入信号</text>
<path d="M238 863 279 922 280 940 265 927z" fill="#fff"/>
<g font-size="12" fill="#ff1a1a"><text x="145" y="951">☆发财了</text><text x="202" y="949">☆发财了</text><text x="284" y="959">☆发财了</text><text x="882" y="916">☆发财了</text><text x="928" y="916">☆发财了</text><text x="992" y="943">☆发财了</text></g>
<g font-size="12" fill="#00ee00"><text x="145" y="965">☆大底</text><text x="202" y="965">☆大底</text><text x="292" y="965">☆大底</text><text x="985" y="965">☆大底</text></g>
<text x="993" y="925" font-size="11" fill="#fff">拉</text>

<!-- axis -->
<path d="M22.500 967V973M97.500 967V973M222.500 967V973M362.500 967V973M474.500 967V973M628.500 967V973M782.500 967V973M908.500 967V973M1034.500 967V973M1197.500 967V973" stroke="#8a0000"/>
<g font-size="13" fill="#ff3232"><text x="23" y="979">07</text><text x="98" y="979">08</text><text x="224" y="979">09</text><text x="365" y="979">10</text><text x="477" y="979">11</text><text x="631" y="979">12</text><text x="783" y="979">01</text><text x="910" y="979">02</text><text x="1036" y="979">03</text><text x="1197" y="979">04</text></g>

<!-- watermark -->
<rect x="1084" y="947" width="35" height="35" rx="8" fill="#f3532b"/><circle cx="1101.500" cy="964.500" r="12.500" fill="#fff"/><circle cx="1101.500" cy="964.500" r="10" fill="#e8402a"/><text x="1101.500" y="969" font-size="13" fill="#fff" text-anchor="middle">财</text>
<text x="1122" y="972" font-size="25" font-weight="bold" fill="#f04a20">财富池</text>
<text x="1122" y="984" font-size="12" fill="#888" textLength="73" lengthAdjust="spacingAndGlyphs">www.cfchi.com</text>

<!-- bottom tabs -->
<rect x="21" y="985" width="924" height="6" fill="#a8a8a8"/>
<rect x="21.500" y="985.500" width="32" height="6" fill="#c4c4c4" stroke="#666"/>
<path d="M153 985H232L229 991H156z" fill="#8a0000"/>
<path d="M113 985l3 6M152 985l3 6M232 985l-3 6M265 985l3 6M298 985l3 6M337 985l3 6M372 985l3 6M423 985l3 6M462 985l3 6M500 985l3 6M530 985l3 6M563 985l3 6M608 985l3 6M648 985l3 6M688 985l3 6M735 985l3 6M773 985l3 6M812 985l3 6M848 985l3 6M887 985l3 6M945 985l-3 6" stroke="#000" fill="none"/>
<g class="tabs"><text class="t" x="37" y="996">设置</text><text class="t" x="84" y="996">指标平台</text><text class="t" x="133" y="996">资讯</text><text class="t" x="192" y="996" style="fill:#fff">波段王指标</text><text class="t" x="245" y="996">KDJ</text><text class="t" x="280" y="996">RSI</text><text class="t" x="317" y="996">BOLL</text><text class="t" x="352" y="996">主力</text><text class="t" x="397" y="996">WAR</text><text class="t" x="443" y="996">DMI</text><text class="t" x="480" y="996">BIAS</text><text class="t" x="516" y="996">ASI</text><text class="t" x="546" y="996">VR</text><text class="t" x="586" y="996">ARBR</text><text class="t" x="630" y="996">DPO</text><text class="t" x="670" y="996">TRIX</text><text class="t" x="712" y="996">新DMA</text><text class="t" x="755" y="996">BBI</text><text class="t" x="791" y="996">MTM</text><text class="t" x="831" y="996">OBV</text><text class="t" x="868" y="996">SAR</text><text class="t" x="914" y="996">EXPMA</text></g>
</svg>
</body></html>
